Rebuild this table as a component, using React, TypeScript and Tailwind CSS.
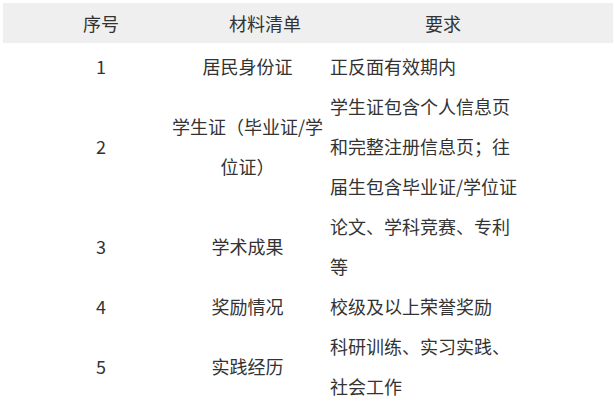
const rows = [
  { no: '1', name: '居民身份证', req: '正反面有效期内' },
  { no: '2', name: '学生证（毕业证/学位证）', req: '学生证包含个人信息页和完整注册信息页；往届生包含毕业证/学位证' },
  { no: '3', name: '学术成果', req: '论文、学科竞赛、专利等' },
  { no: '4', name: '奖励情况', req: '校级及以上荣誉奖励' },
  { no: '5', name: '实践经历', req: '科研训练、实习实践、社会工作' },
]

export default function App() {
  return (
    <div
      className="w-[615px] h-[412px] bg-white pt-[3px] pl-[3px] pr-[2px] text-[18px] leading-[40px] text-[#333]"
      style={{ fontFamily: '"Microsoft YaHei", "Noto Sans CJK SC", "Noto Sans", sans-serif' }}
    >
      {/* header */}
      <div className="grid grid-cols-[162px_165px_1fr] h-[40px] bg-[#efefef]">
        <div className="pl-[34px] text-center">序号</div>
        <div className="pl-[35px] text-center">材料清单</div>
        <div className="pl-[95px]">要求</div>
      </div>

      {/* body */}
      <div className="mt-[3px]">
        {rows.map((r) => (
          <div key={r.no} className="grid grid-cols-[162px_165px_1fr] items-center">
            <div className="pl-[34px] text-center">{r.no}</div>
            <div className="text-center">{r.name}</div>
            <div className="max-w-[190px]">{r.req}</div>
          </div>
        ))}
      </div>
    </div>
  )
}
